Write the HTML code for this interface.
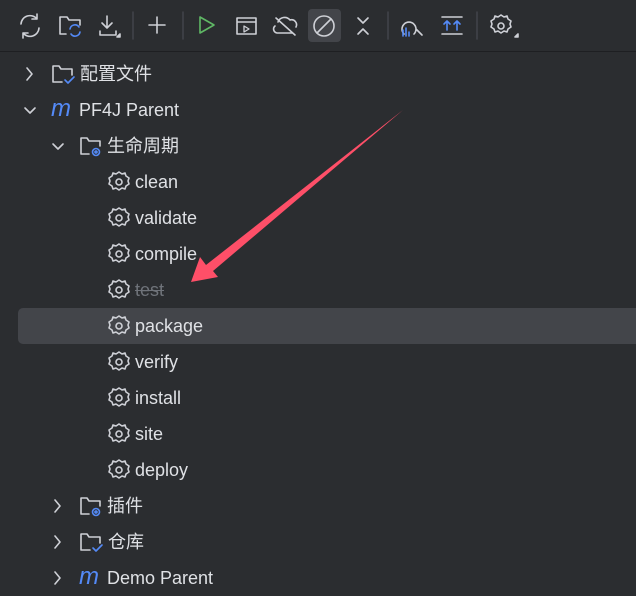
<!DOCTYPE html>
<html><head><meta charset="utf-8"><style>
body{margin:0;width:636px;height:594px;background:#2b2d30;overflow:hidden;position:relative;font-family:"Liberation Sans","Noto Sans CJK SC",sans-serif;color:#dfe1e5;font-size:18px}
.abs{position:absolute}
.t{position:absolute;line-height:36px;height:36px;white-space:nowrap}
svg{position:absolute;overflow:visible}
</style></head><body>
<div class="abs" style="left:0;top:51px;width:636px;height:1px;background:#1e1f22"></div>
<div class="abs" style="left:18px;top:308px;width:630px;height:36px;border-radius:5px;background:#43454a"></div>

<!-- toolbar -->
<svg width="636" height="51" style="left:0;top:0" fill="none" stroke="#ced0d6" stroke-width="1.6" stroke-linecap="round" stroke-linejoin="round">
 <path d="M21 24a9 9 0 0 1 16-5M39 28a9 9 0 0 1-16 5M37 14v5h-5M23 38v-5h5"/>
 <path d="M66 34h-6V17h7l2 3h11v5"/>
 <path d="M70 29a5 5 0 0 1 9-2M80 32a5 5 0 0 1-9 2" stroke="#548af7"/>
 <path d="M107 16v12M102 23l5 5 5-5M100 31v4h16v-4"/><path d="M117 37l3-3v3z" fill="#ced0d6"/>
 <path d="M133 12v27M183 12v27M388 12v27M477 12v27" stroke="#43454a" stroke-width="1.5"/>
 <path d="M157 17v16M149 25h16"/>
 <path d="M200 17v16l14-8z" stroke="#5fb865"/>
 <path d="M237 18h19v16h-19zM237 22h19"/><path d="M244 26v6l5-3z" stroke-width="1.3"/>
 <path d="M278 22a7 7 0 0 1 12-2 5 5 0 0 1 6 7M293 33h-16a4 4 0 0 1-2-7M276 18l19 17"/>
 <rect x="308" y="9" width="33" height="33" rx="4" fill="#43454a" stroke="none"/>
 <circle cx="324" cy="26" r="10"/><path d="M317 33l14-14"/>
 <path d="M358 18l5 5 5-5M358 34l5-5 5 5"/>
 <path d="M404 34a7 7 0 1 1 10 0M416 29l6 6"/>
 <path d="M403 36v-6M406 36v-8M409 36v-4" stroke="#548af7"/>
 <path d="M442 17h20M442 34h20" /><path d="M447 30v-9M444 24l3-3 3 3M457 30v-9M454 24l3-3 3 3" stroke="#548af7"/>
 <path d="M501 15l3 2 3-1 1 3 3 2-1 3 1 3-3 2-1 3-3-1-3 2-3-2-3 1-1-3-3-2 1-3-1-3 3-2 1-3 3 1z"/><circle cx="501" cy="26" r="3"/>
 <path d="M515 37l3-3v3z" fill="#ced0d6"/>
</svg>

<!-- tree icons -->
<svg width="636" height="594" style="left:0;top:0" fill="none" stroke="#ced0d6" stroke-width="1.6" stroke-linecap="round" stroke-linejoin="round">
 <path d="M27 68l5 6-5 6"/>
 <path d="M25 108l5 5 5-5"/>
 <path d="M53 144l5 5 5-5"/>
 <path d="M55 500l5 6-5 6M55 536l5 6-5 6M55 572l5 6-5 6"/>
 <!-- folder 配置 -->
 <path d="M62 82h-9V66h6l2 3h11v6"/><path d="M65 80l3 3 6-6" stroke="#548af7"/>
 <!-- 生命 folder -->
 <path d="M89 154h-8V138h6l2 3h11v5"/><circle cx="96" cy="152" r="3.5" stroke="#548af7"/><circle cx="96" cy="152" r="1" stroke="#548af7"/>
 <!-- 插件 -->
 <path d="M89 514h-8V498h6l2 3h11v5"/><circle cx="96" cy="512" r="3.5" stroke="#548af7"/><circle cx="96" cy="512" r="1" stroke="#548af7"/>
 <!-- 仓库 -->
 <path d="M90 550h-9V534h6l2 3h11v6"/><path d="M93 548l3 3 6-6" stroke="#548af7"/>
</svg>
<div class="t" style="left:51px;top:92px;color:#548af7;font-style:italic;font-size:24px;line-height:34px">m</div>
<div class="t" style="left:79px;top:560px;color:#548af7;font-style:italic;font-size:24px;line-height:34px">m</div>

<div class="t" style="left:80px;top:56px">配置文件</div>
<div class="t" style="left:79px;top:92px">PF4J Parent</div>
<div class="t" style="left:107px;top:128px">生命周期</div>
<div class="t" style="left:107px;top:488px">插件</div>
<div class="t" style="left:108px;top:524px">仓库</div>
<div class="t" style="left:107px;top:560px">Demo Parent</div>

<svg width="636" height="594" style="left:0;top:0" fill="none" stroke="#ced0d6" stroke-width="1.6" stroke-linejoin="round">
 <defs><g id="g"><path d="M0-10l3 2 3-1 1 3 3 2-1 3 1 3-3 2-1 3-3-1-3 2-3-2-3 1-1-3-3-2 1-3-1-3 3-2 1-3 3 1z"/><circle r="3"/></g></defs>
 <use href="#g" x="119" y="182"/><use href="#g" x="119" y="218"/><use href="#g" x="119" y="254"/><use href="#g" x="119" y="290"/>
 <use href="#g" x="119" y="326"/><use href="#g" x="119" y="362"/><use href="#g" x="119" y="398"/><use href="#g" x="119" y="434"/><use href="#g" x="119" y="470"/>
</svg>
<div class="t" style="left:135px;top:164px">clean</div>
<div class="t" style="left:135px;top:200px">validate</div>
<div class="t" style="left:135px;top:236px">compile</div>
<div class="t" style="left:135px;top:272px;color:#6f737a;text-decoration:line-through">test</div>
<div class="t" style="left:135px;top:308px">package</div>
<div class="t" style="left:135px;top:344px">verify</div>
<div class="t" style="left:135px;top:380px">install</div>
<div class="t" style="left:135px;top:416px">site</div>
<div class="t" style="left:135px;top:452px">deploy</div>

<svg width="636" height="594" style="left:0;top:0">
 <polygon points="403,110 213,271 218,277 191,282 200,257 206,265" fill="#fe4f68"/>
</svg>
</body></html>
